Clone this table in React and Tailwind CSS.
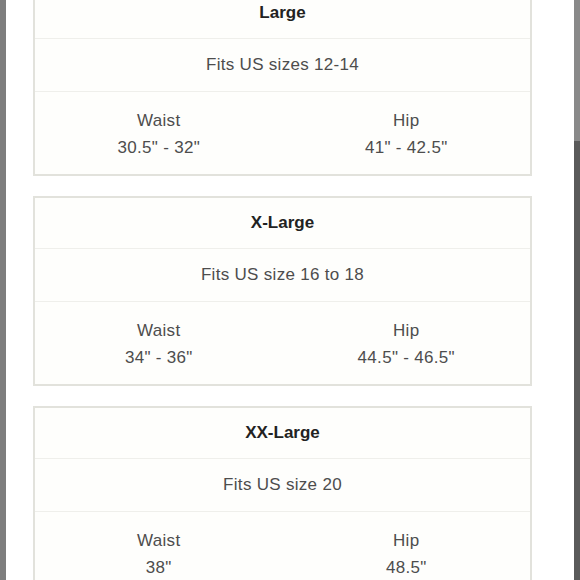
const sizes = [
  { name: "Large", fits: "Fits US sizes 12-14", waist: "30.5\" - 32\"", hip: "41\" - 42.5\"" },
  { name: "X-Large", fits: "Fits US size 16 to 18", waist: "34\" - 36\"", hip: "44.5\" - 46.5\"" },
  { name: "XX-Large", fits: "Fits US size 20", waist: "38\"", hip: "48.5\"" },
];

function SizeCard({ s }) {
  return (
    <div className="shrink-0 border-2 border-[#e2e2dc] bg-[#fefefc] h-[190px] flex flex-col">
      {/* Header */}
      <div className="h-[51px] flex items-center justify-center border-b border-[#efefeb] text-[17px] font-bold text-[#222]">
        {s.name}
      </div>
      {/* Fits */}
      <div className="h-[53px] flex items-center justify-center border-b border-[#efefeb] text-[17px] text-[#4d4d4d] tracking-[0.3px]">
        {s.fits}
      </div>
      {/* Measurements */}
      <div className="flex-1 grid grid-cols-2 text-[17px] text-[#4d4d4d] tracking-[0.3px] leading-[27px] pt-[2px]">
        <div className="flex flex-col items-center justify-center">
          <span>Waist</span>
          <span>{s.waist}</span>
        </div>
        <div className="flex flex-col items-center justify-center">
          <span>Hip</span>
          <span>{s.hip}</span>
        </div>
      </div>
    </div>
  );
}

export default function App() {
  return (
    <div
      className="w-[580px] h-[580px] overflow-hidden flex bg-white"
      style={{ fontFamily: '"Liberation Sans", Arial, sans-serif' }}
    >
      <div className="w-[6px] bg-[#7e7e7e]" />
      <div className="flex-1 pl-[27px] pr-[42px] -mt-[14px] flex flex-col gap-[20px]">
        {sizes.map((s) => (
          <SizeCard key={s.name} s={s} />
        ))}
      </div>
      <div className="w-[6px] flex flex-col">
        <div className="h-[141px] bg-[#898989]" />
        <div className="flex-1 bg-[#5a5a5a]" />
      </div>
    </div>
  );
}
